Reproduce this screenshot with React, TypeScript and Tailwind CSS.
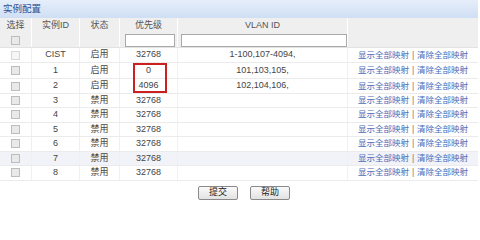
import React from 'react'

const rows = [
  { id: 'CIST', state: '启用', pri: '32768', vlan: '1-100,107-4094,', h: 'h-[15px]' },
  { id: '1', state: '启用', pri: '0', vlan: '101,103,105,', h: 'h-[16px]' },
  { id: '2', state: '启用', pri: '4096', vlan: '102,104,106,', h: 'h-[15px]' },
  { id: '3', state: '禁用', pri: '32768', vlan: '', h: 'h-[14px]' },
  { id: '4', state: '禁用', pri: '32768', vlan: '', h: 'h-[14.5px]' },
  { id: '5', state: '禁用', pri: '32768', vlan: '', h: 'h-[14.5px]' },
  { id: '6', state: '禁用', pri: '32768', vlan: '', h: 'h-[14.5px]' },
  { id: '7', state: '禁用', pri: '32768', vlan: '', h: 'h-[14.5px]' },
  { id: '8', state: '禁用', pri: '32768', vlan: '', h: 'h-[14.5px]' },
]

const cols = 'grid grid-cols-[32px_48px_40px_58px_170px_1fr]'

const Check = ({ light }: { light?: boolean }) => (
  <span
    className={`block w-[9px] h-[9px] border ${light ? 'border-[#d8d8d8] bg-[#f6f6f6]' : 'border-[#bdbdbd] bg-[#e9e9e9]'}`}
  />
)

export default function App() {
  return (
    <div className="relative w-[480px] h-[203px] bg-white text-[9px] text-[#444] font-['Liberation_Sans','Noto_Sans_CJK_SC',sans-serif]">
      {/* Title */}
      <div className="h-[18px] w-[478px] flex items-center pl-[3px] bg-gradient-to-b from-[#e6eefa] to-[#cfdff4] text-[#2d5290] text-[9.5px]">
        实例配置
      </div>

      <div className="w-[478px]">
        {/* Header */}
        <div className={`${cols} h-[15px] bg-[#efefef] text-[#555] items-center text-center`}>
          <div className="border-r border-white h-full flex items-center justify-center">选择</div>
          <div className="border-r border-white h-full flex items-center justify-center">实例ID</div>
          <div className="border-r border-white h-full flex items-center justify-center">状态</div>
          <div className="border-r border-white h-full flex items-center justify-center">优先级</div>
          <div className="border-r border-white h-full flex items-center justify-center">VLAN ID</div>
          <div />
        </div>

        {/* Input row */}
        <div className={`${cols} h-[15px] bg-[#efefef] items-center border-b border-[#e2e2e2]`}>
          <div className="border-r border-white h-full flex items-center justify-center">
            <Check />
          </div>
          <div className="border-r border-white h-full" />
          <div className="border-r border-white h-full" />
          <div className="border-r border-white h-full flex items-center pl-[5px]">
            <div className="w-[50px] h-[13px] bg-white border border-[#a9a9a9]" />
          </div>
          <div className="border-r border-white h-full flex items-center pl-[3px]">
            <div className="w-[166px] h-[13px] bg-white border border-[#a9a9a9]" />
          </div>
          <div />
        </div>

        {/* Data rows */}
        {rows.map((r, i) => (
          <div
            key={r.id}
            className={`${cols} ${r.h} items-center text-center border-b border-[#ebebeb] ${i === 7 ? 'bg-[#f1f3f8]' : 'bg-white'}`}
          >
            <div className="h-full flex items-center justify-center border-r border-[#f0f0f0]">
              <Check light={i === 0} />
            </div>
            <div className="h-full flex items-center justify-center border-r border-[#f0f0f0]">{r.id}</div>
            <div className="h-full flex items-center justify-center border-r border-[#f0f0f0]">{r.state}</div>
            <div className="h-full flex items-center justify-center border-r border-[#f0f0f0]">{r.pri}</div>
            <div className="h-full flex items-center justify-center border-r border-[#f0f0f0]">{r.vlan}</div>
            <div className="h-full flex items-center justify-center text-[8.5px] text-[#4a6cb8]">
              显示全部映射<span className="text-[#777] mx-[3px]">|</span>清除全部映射
            </div>
          </div>
        ))}

        {/* Buttons */}
        <div className="flex justify-center gap-[12px] pt-[5px] pl-[10px]">
          <button className="w-[40px] h-[14px] border border-[#8a8a8a] rounded-[2px] bg-gradient-to-b from-[#fafafa] to-[#e2e2e2] text-[9px] text-[#222] leading-none">
            提交
          </button>
          <button className="w-[40px] h-[14px] border border-[#8a8a8a] rounded-[2px] bg-gradient-to-b from-[#fafafa] to-[#e2e2e2] text-[9px] text-[#222] leading-none">
            帮助
          </button>
        </div>
      </div>

      {/* Red annotation box */}
      <div className="absolute left-[133px] top-[63px] w-[34px] h-[30px] border-2 border-[#cc2020]" />
    </div>
  )
}
